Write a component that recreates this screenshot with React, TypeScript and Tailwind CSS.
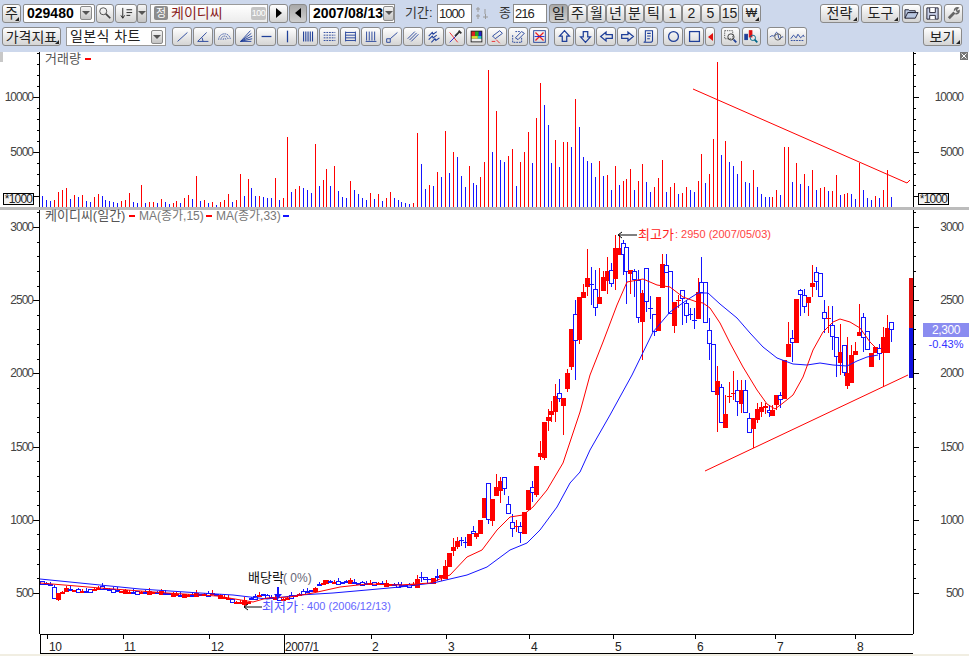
import type { ReactNode } from 'react'

const RED = '#ff0000'
const BLUE = '#1414ff'
const NAVY = '#1f3f99'

// volume bar heights in px, negative = blue
const volumes = [
  -11, -7, -6, 7, 15, 17, 19, -8, 12, -10, 12, -6, -5, 10, 13, -11, -7, -6, -5, -4, 6, 7, 14, -5, -4, 22, -4, 5, 5, -4,
  8, -5, -3, 4, 6, -4, 9, 12, -8, 31, -6, 7, -4, 5, -2, 5, 7, 13, -5, 7, 33, -11, 28, -19, -11, 11, -10, -9, -9, 29,
  -7, 9, 70, -15, 18, 21, -19, -17, -14, 63, -21, 27, 38, -21, 41, -16, -10, -9, 26, -17, -13, -9, -7, 14, -8, 13, -6,
  9, 15, -9, -7, -5, -4, -3, 4, 74, -43, -18, 22, -21, 35, -30, 76, -34, 55, -50, -31, -20, 41, -24, -22, 30, 45, 137,
  -55, 96, -47, -45, 51, 58, -21, 45, 55, 75, -44, 89, 124, -102, -82, -44, 67, -40, 65, 65, -60, 108, -80, -50, -46,
  -44, -30, 46, -31, 32, -17, 41, -22, 26, 28, 38, -17, 26, 43, -25, -15, 20, 29, 47, -15, 20, 24, -13, 14, 20, -17,
  -15, 26, 53, -24, 33, 68, 145, -52, 66, -45, -41, -33, 46, -25, -24, 37, -20, -13, -10, -10, 10, 17, -12, 60, 60,
  -25, 44, -23, 33, -21, 37, -17, 19, 20, -16, 16, 32, -12, 13, 14, -13, -8, 44, -17, -9, -7, 11, -9, 17, 37, -10,
]

// r/b, body top, body bottom, wick top, wick bottom (page y), from index 96 on
type Candle = [string, number, number, number, number]
const candles: Candle[] = [
  ['b', 577, 578, 572, 582], ['b', 577, 580, 577, 580], ['b', 579, 584, 579, 584], ['r', 578, 584, 578, 584],
  ['b', 576, 578, 569, 581], ['r', 575, 578, 575, 581], ['r', 566, 579, 560, 579], ['r', 553, 567, 553, 567],
  ['r', 547, 551, 538, 556], ['r', 541, 547, 537, 549], ['b', 540, 541, 537, 546], ['b', 542, 543, 537, 548],
  ['r', 534, 546, 534, 546], ['b', 531, 534, 526, 534], ['r', 533, 537, 533, 539], ['r', 520, 534, 520, 534],
  ['r', 498, 518, 498, 518], ['b', 483, 520, 483, 524], ['r', 499, 521, 499, 526], ['r', 487, 496, 474, 496],
  ['r', 481, 491, 477, 503], ['b', 477, 489, 477, 495], ['b', 504, 514, 496, 514], ['b', 522, 529, 514, 537],
  ['r', 526, 527, 520, 532], ['b', 526, 533, 522, 543], ['r', 512, 534, 512, 534], ['r', 490, 510, 490, 510],
  ['b', 487, 493, 481, 502], ['r', 466, 495, 466, 497], ['r', 453, 457, 441, 460], ['r', 422, 458, 422, 460],
  ['r', 417, 421, 409, 431], ['r', 411, 415, 401, 422], ['r', 396, 412, 384, 422], ['b', 393, 399, 379, 402],
  ['r', 398, 406, 398, 435], ['r', 373, 389, 369, 392], ['r', 329, 367, 329, 370], ['b', 314, 341, 300, 380],
  ['r', 297, 340, 297, 344], ['r', 292, 298, 284, 298], ['r', 278, 287, 249, 296], ['b', 284, 285, 267, 305],
  ['b', 289, 308, 270, 316], ['r', 297, 304, 268, 304], ['r', 277, 291, 271, 291], ['r', 271, 281, 257, 294],
  ['b', 270, 284, 263, 287], ['r', 248, 279, 235, 290], ['r', 248, 255, 235, 255], ['b', 243, 255, 240, 275],
  ['b', 247, 272, 247, 304], ['r', 270, 274, 270, 294], ['b', 271, 280, 269, 297], ['b', 280, 318, 270, 323],
  ['r', 293, 322, 290, 360], ['b', 268, 302, 268, 312], ['b', 308, 309, 296, 319], ['b', 314, 332, 314, 336],
  ['r', 297, 331, 297, 331], ['r', 264, 288, 254, 288], ['b', 265, 273, 254, 273], ['b', 271, 314, 271, 314],
  ['r', 302, 326, 302, 333], ['r', 300, 301, 295, 308], ['b', 290, 299, 290, 325], ['b', 303, 316, 300, 323],
  ['b', 314, 315, 308, 320], ['b', 320, 321, 308, 329], ['r', 292, 319, 278, 319], ['b', 282, 293, 257, 293],
  ['b', 282, 323, 282, 323], ['b', 330, 344, 318, 360], ['b', 344, 392, 344, 392], ['r', 381, 395, 366, 432],
  ['b', 387, 423, 384, 423], ['r', 414, 428, 395, 428], ['r', 396, 397, 382, 403], ['r', 393, 394, 371, 400],
  ['b', 390, 402, 380, 416], ['r', 390, 404, 380, 413], ['b', 390, 413, 380, 413], ['b', 418, 433, 413, 433],
  ['r', 418, 429, 418, 448], ['r', 409, 420, 403, 423], ['r', 407, 412, 402, 417], ['r', 406, 408, 403, 414],
  ['b', 410, 413, 405, 417], ['r', 410, 416, 405, 416], ['r', 395, 405, 395, 410], ['b', 395, 400, 392, 408],
  ['r', 360, 399, 360, 399], ['r', 344, 357, 322, 357], ['b', 338, 343, 330, 362], ['r', 299, 343, 299, 343],
  ['b', 290, 295, 289, 316], ['b', 295, 307, 289, 313], ['r', 297, 303, 297, 316], ['r', 283, 287, 265, 297],
  ['b', 272, 282, 267, 290], ['b', 273, 297, 273, 297], ['b', 312, 319, 300, 333], ['r', 318, 319, 306, 333],
  ['b', 325, 337, 306, 350], ['b', 337, 357, 337, 377], ['r', 352, 363, 324, 375], ['b', 345, 373, 345, 376],
  ['r', 373, 386, 337, 389], ['r', 355, 383, 345, 383], ['r', 351, 355, 342, 355], ['r', 332, 336, 304, 336],
  ['b', 317, 338, 313, 352], ['b', 331, 350, 331, 350], ['r', 353, 367, 353, 367], ['r', 347, 353, 347, 353],
  ['b', 348, 354, 344, 360], ['r', 337, 353, 327, 387], ['r', 328, 353, 315, 353], ['b', 322, 330, 322, 342],
]

// where the flat stretch of the first months sits: [index, mid y]
const flatMids = [
  [0, 583], [2, 585], [3, 592], [4, 596], [6, 590], [11, 592], [15, 588], [17, 590], [23, 593], [29, 593], [36, 596],
  [41, 595], [43, 594], [47, 599], [49, 603], [52, 603], [53, 599], [56, 595], [58, 598], [61, 600], [64, 596],
  [67, 592], [69, 590], [70, 585], [72, 582], [75, 583], [78, 582], [80, 584], [85, 584], [91, 586], [95, 585],
]

function flatCandle(i: number): Candle {
  if (i === 3) return ['b', 587, 599, 585, 599]
  if (i === 4) return ['r', 593, 600, 593, 601]
  if (i === 51) return ['r', 600, 605, 597, 607]
  if (i === 95) return ['r', 579, 588, 575, 588]
  const k = flatMids.findIndex((m) => m[0] >= i)
  const [x1, y1] = flatMids[Math.max(k - 1, 0)]
  const [x2, y2] = flatMids[k]
  const mid = x2 === x1 ? y2 : y1 + ((y2 - y1) * (i - x1)) / (x2 - x1)
  const half = (i * 7) % 3 === 0 ? 2 : 1
  const top = Math.round(mid - half)
  const up = volumes[i] > 0
  return [up ? 'r' : 'b', top, top + half * 2, top - (i * 5) % 4, top + half * 2 + (i * 3) % 3]
}

const allCandles: Candle[] = [...Array.from({ length: 96 }, (_, i) => flatCandle(i)), ...candles]

const barX = (i: number) => Math.round(42.3 + 3.947 * i)

const maRed =
  '40,583 100,588 167,593 217,596 253,602 267,598 290,597 313,593 340,587 367,584 400,585 430,583 450,575 467,557 482,550 497,530 510,517 523,515 533,507 547,490 563,463 573,433 580,412 590,375 603,342 617,305 627,282 643,279 657,285 670,287 683,297 697,302 703,303 710,308 720,323 730,343 743,367 757,390 767,404 775,409 783,403 793,395 803,377 813,350 823,332 833,322 840,319 850,322 860,328 870,342 878,350'
const maBlue =
  '40,579 100,585 140,589 200,593 233,595 267,599 300,595 333,593 367,590 400,587 433,583 467,575 487,567 510,550 527,543 540,530 557,507 570,483 580,472 590,450 610,415 632,375 653,332 670,312 687,300 698,293 708,293 720,304 737,318 750,333 763,347 777,358 793,364 807,365 820,363 833,365 847,366 857,361 867,357 878,355'

function Ticks({ from, to, step, major }: { from: number; to: number; step: number; major: number }) {
  const rows: ReactNode[] = []
  let n = 0
  for (let y = from; y >= to; y -= step) {
    const big = n % major === 0
    const yy = Math.round(y)
    rows.push(
      <g key={n}>
        <rect x={big ? 33 : 37} y={yy} width={big ? 6 : 2} height={1} fill="#000" />
        <rect x={913} y={yy} width={big ? 6 : 3} height={1} fill="#000" />
      </g>,
    )
    n++
  }
  return <g>{rows}</g>
}

function AxisLabel({ y, children }: { y: number; children: string }) {
  return (
    <>
      <text x={33} y={y + 4} textAnchor="end" fontSize={12} letterSpacing={-1} fill="#444">
        {children}
      </text>
      <text x={963} y={y + 4} textAnchor="end" fontSize={12} letterSpacing={-1} fill="#444">
        {children}
      </text>
    </>
  )
}

function ScaleBox({ x }: { x: number }) {
  return (
    <g>
      <rect x={x + 0.5} y={193.5} width={30} height={11} fill="#f2f2f2" stroke="#000" />
      <text x={x + 15.5} y={203} textAnchor="middle" fontSize={12} letterSpacing={-0.8} fill="#222" shapeRendering="auto">
        *1000
      </text>
    </g>
  )
}

function VolumePanel() {
  return (
    <svg viewBox="0 52 969 155" className="block w-[969px] h-[155px] shrink-0 bg-white overflow-visible" shapeRendering="crispEdges">
      <rect x={0} y={52} width={3} height={10} fill="#c8c8c8" />
      <rect x={39} y={52} width={1} height={155} fill="#000" />
      <rect x={913} y={52} width={1} height={155} fill="#000" />
      <Ticks from={196} to={53} step={11} major={99} />
      <rect x={33} y={97} width={6} height={1} fill="#000" />
      <rect x={33} y={152} width={6} height={1} fill="#000" />
      <rect x={913} y={97} width={6} height={1} fill="#000" />
      <rect x={913} y={152} width={6} height={1} fill="#000" />
      {volumes.map((v, i) => (
        <rect key={i} x={barX(i)} y={207 - Math.abs(v)} width={1} height={Math.abs(v)} fill={v > 0 ? RED : BLUE} />
      ))}
      <g shapeRendering="auto">
        <text x={45} y={63} fontSize={13} fill="#555">
          거래량
        </text>
        <rect x={85} y={58} width={6} height={2} fill={RED} />
        <AxisLabel y={97}>10000</AxisLabel>
        <AxisLabel y={152}>5000</AxisLabel>
        <polyline points="693,89 907,183 910,180" fill="none" stroke={RED} strokeWidth={1} />
      </g>
      <ScaleBox x={3} />
      <ScaleBox x={918} />
      <rect x={960} y={52} width={8} height={8} fill="#777" />
      <path d="M961.5 53.5l5 5M966.5 53.5l-5 5" stroke="#fff" fill="none" shapeRendering="auto" />
    </svg>
  )
}

function PricePanel() {
  return (
    <svg viewBox="0 210 969 424" className="block w-[969px] h-[424px] shrink-0 bg-white overflow-visible" shapeRendering="crispEdges">
      <rect x={39} y={210} width={1} height={424} fill="#000" />
      <rect x={913} y={210} width={1} height={424} fill="#000" />
      <Ticks from={593} to={212} step={14.64} major={5} />
      <g shapeRendering="auto">
        <text x={45} y={220} fontSize={13} fill="#555">
          케이디씨(일간)
        </text>
        <text x={139} y={220} fontSize={12} fill="#777">
          MA(종가,15)
        </text>
        <text x={216} y={220} fontSize={12} fill="#777">
          MA(종가,33)
        </text>
        <AxisLabel y={227}>3000</AxisLabel>
        <AxisLabel y={300}>2500</AxisLabel>
        <AxisLabel y={373}>2000</AxisLabel>
        <AxisLabel y={447}>1500</AxisLabel>
        <AxisLabel y={520}>1000</AxisLabel>
        <AxisLabel y={593}>500</AxisLabel>
      </g>
      <rect x={129} y={215} width={6} height={2} fill={RED} />
      <rect x={206} y={215} width={6} height={2} fill={RED} />
      <rect x={283} y={215} width={6} height={2} fill={BLUE} />
      {allCandles.map(([c, top, bot, hi, lo], i) => {
        const x = barX(i)
        const color = c === 'r' ? RED : BLUE
        const flat = bot - top < 2
        return (
          <g key={i}>
            <rect x={x} y={hi} width={1} height={Math.max(lo - hi, 1)} fill={color} />
            {c === 'r' || flat ? (
              <rect x={x - 2} y={top} width={5} height={Math.max(bot - top, 1)} fill={color} />
            ) : (
              <rect x={x - 1.5} y={top + 0.5} width={4} height={bot - top - 1} fill="#fff" stroke={color} />
            )}
          </g>
        )
      })}
      <g shapeRendering="auto" fill="none" strokeWidth={1}>
        <polyline points={maBlue} stroke={BLUE} />
        <polyline points={maRed} stroke={RED} />
        <polyline points="705,471 908,375" stroke={RED} strokeWidth={1} />
        <path d="M637 235H619M622 232l-4 3 4 3" stroke="#000" />
        <path d="M262 607H245M248 604l-4 3 4 3" stroke="#000" />
        <path d="M278 587V596" stroke={BLUE} strokeWidth={2} />
      </g>
      <path d="M274 594h8l-4 5z" fill={BLUE} shapeRendering="auto" />
      <g shapeRendering="auto">
        <text x={638} y={239} fontSize={13} fill="#f22">
          최고가
        </text>
        <text x={675} y={238} fontSize={11} fill="#f44">
          : 2950 (2007/05/03)
        </text>
        <text x={248} y={582} fontSize={13} fill="#111">
          배당락
        </text>
        <text x={283} y={582} fontSize={12} fill="#667">
          ( 0%)
        </text>
        <text x={262} y={611} fontSize={13} fill="#55f">
          최저가
        </text>
        <text x={301} y={610} fontSize={11} fill="#66f">
          : 400 (2006/12/13)
        </text>
      </g>
      <rect x={909} y={278} width={4} height={50} fill="#e01010" />
      <rect x={909} y={328} width={4} height={50} fill="#1010e0" />
      <rect x={923} y={323} width={46} height={14} fill="#8a8cf0" />
      <g shapeRendering="auto">
        <text x={946} y={334} textAnchor="middle" fontSize={12} letterSpacing={-0.4} fill="#fff">
          2,300
        </text>
        <text x={946} y={348} textAnchor="middle" fontSize={11} fill="#33f">
          -0.43%
        </text>
      </g>
    </svg>
  )
}

const monthTicks: [number, string, number][] = [
  [47, '10', 49], [123, '11', 124], [209, '12', 211], [371, '2', 372], [446, '3', 448],
  [529, '4', 531], [613, '5', 615], [695, '6', 697], [775, '7', 777], [855, '8', 857],
]

function DateAxis() {
  return (
    <svg viewBox="0 634 969 20" className="block w-[969px] h-[20px] shrink-0 bg-white" shapeRendering="crispEdges">
      <rect x={40} y={634} width={873} height={1} fill="#000" />
      <rect x={40} y={653} width={873} height={1} fill="#000" />
      <rect x={40} y={634} width={1} height={20} fill="#000" />
      {monthTicks.map(([x, label, tx]) => (
        <g key={label}>
          <rect x={x} y={634} width={1} height={5} fill="#000" />
          <text x={tx} y={651} fontSize={12} letterSpacing={-0.5} fill="#222" shapeRendering="auto">
            {label}
          </text>
        </g>
      ))}
      <rect x={284} y={634} width={1} height={20} fill="#000" />
      <text x={285} y={651} fontSize={12} letterSpacing={-0.5} fill="#222" shapeRendering="auto">
        2007/1
      </text>
    </svg>
  )
}

function Btn({ w, pressed, corner, children }: { w: string; pressed?: boolean; corner?: boolean; children?: ReactNode }) {
  return (
    <div
      className={`${w} relative h-[19px] shrink-0 flex items-center justify-center rounded-[3px] border border-[#8a8a8a] text-[14px] leading-none text-[#222] ${
        pressed ? 'bg-gradient-to-b from-[#a9a9a9] to-[#cfcfcf]' : 'bg-gradient-to-b from-[#ffffff] to-[#d4d4d4]'
      }`}
    >
      {children}
      {corner && (
        <span className="absolute right-[1px] bottom-[1px] w-0 h-0 border-l-[4px] border-l-transparent border-b-[4px] border-b-[#222]" />
      )}
    </div>
  )
}

function Caret({ className }: { className: string }) {
  return (
    <div className={`${className} shrink-0 flex items-center justify-center rounded-[2px] border border-[#8a8a8a] bg-gradient-to-b from-[#f4f4f4] to-[#c4c4c4]`}>
      <span className="w-0 h-0 border-x-[4px] border-x-transparent border-t-[4px] border-t-[#555]" />
    </div>
  )
}

function Ico({ children }: { children: ReactNode }) {
  return (
    <svg viewBox="0 0 19 19" className="w-[17px] h-[17px]" fill="none" stroke={NAVY} strokeWidth={1}>
      {children}
    </svg>
  )
}

const drawTools: ReactNode[] = [
  <path d="M4 15L15 5" />,
  <path d="M3 15H15M3 15L13 5M9 15L8 11" />,
  <path d="M3 13a6.5 6.5 0 0 1 13 0M5.5 13a4 4 0 0 1 8 0M8 13a1.5 1.5 0 0 1 3 0" strokeDasharray="1.5 1" />,
  <path d="M4 15L15 3M4 15L16 6M4 15L17 9M4 15L17 12M4 15L16 15" />,
  <path d="M4 9.5H15" strokeWidth={1.4} />,
  <path d="M9.5 3V16" strokeWidth={1.4} />,
  <path d="M4 4V15M6.5 4V15M9 4V15M11.500 4V15M14 4V15" strokeWidth={1.2} />,
  <path d="M3 5H16M3 8H16M3 11H16M3 14H16" strokeDasharray="2 1" />,
  <path d="M4 4V15M15 4V15M4 5H15M4 8H15M4 11H15M4 14H15" />,
  <path d="M4 4V14M7 4V14M10 4V14M13 4V14M3 15H15" />,
  <path d="M7 12L15 5M3 12h4v4H3z" />,
  <path d="M3 12L11 4M7 15L15 7M5 13.500L13 5.500" />,
  <path d="M3 9l4-4 1 2 4-3M3 13l4-4 1 2 4-3M6 16l4-4 1 2 4-3" strokeWidth={1.2} />,
  <g>
    <path d="M3 5L12 16" stroke="#e22" />
    <path d="M12 7L3 16" stroke="#22c" />
    <path d="M9 9l5-5M13 3l3 3" stroke="#333" strokeWidth={2} />
  </g>,
  <g stroke="none">
    <rect x={3} y={3} width={13} height={13} fill="#222" />
    <rect x={4} y={4} width={4} height={5} fill="#d22" />
    <rect x={8} y={4} width={4} height={5} fill="#2a2" />
    <rect x={12} y={4} width={3} height={5} fill="#22c" />
    <rect x={4} y={9} width={7} height={3} fill="#dd3" />
    <rect x={11} y={9} width={4} height={3} fill="#2cc" />
    <rect x={4} y={12} width={11} height={3} fill="#eee" />
  </g>,
  <g>
    <path d="M4 9l8-6 3 3-8 6z" />
    <path d="M8 13l4 4" stroke="#e22" />
    <path d="M3 15h4" stroke="#e22" />
  </g>,
  <g>
    <path d="M3 8v8h10V10" strokeDasharray="2 1" />
    <path d="M6 11l7-7 3 2-7 7z" />
    <path d="M6 4h5" strokeDasharray="2 1" />
  </g>,
  <g>
    <rect x={3} y={3} width={13} height={13} />
    <path d="M5 5l9 9" stroke="#e22" strokeWidth={1.4} />
    <path d="M14 5l-9 9" stroke="#e22" strokeWidth={1.4} />
    <path d="M4 9.500h11" stroke="#22c" />
  </g>,
]

const arrows: ReactNode[] = [
  <path d="M9.500 3l5.500 6h-3v6H7V9H4z" strokeWidth={1.4} />,
  <path d="M9.500 16l5.500-6h-3V4H7v6H4z" strokeWidth={1.4} />,
  <path d="M3 9.500l6-5v3h7v4H9v3z" strokeWidth={1.4} />,
  <path d="M16 9.500l-6-5v3H3v4h7v3z" strokeWidth={1.4} />,
  <path d="M6 3h8v11c0 1.500-2 2-3 2H4c1 0 2-.5 2-2zM8 6h4M8 9h4M8 12h3" strokeWidth={1.2} />,
]

function TopBar() {
  return (
    <div className="flex items-center h-[27px] pt-[3px] pb-[4px] pl-[2px] shrink-0">
      <Btn w="w-[19px]" corner>주</Btn>
      <div className="ml-[2px] w-[72px] h-[19px] shrink-0 flex items-center justify-between border border-[#8a8a8a] bg-white pl-[3px] pr-[2px] rounded-[2px]">
        <span className="text-[14px] font-bold text-black">029480</span>
        <Caret className="w-[12px] h-[14px]" />
      </div>
      <div className="ml-[1px]">
        <Btn w="w-[18px]">
          <svg viewBox="0 0 16 16" className="w-[14px] h-[14px]" fill="none" stroke="#444">
            <circle cx={6} cy={6} r={4} />
            <path d="M9 9l5 5" strokeWidth={2} />
          </svg>
        </Btn>
      </div>
      <div className="ml-[1px]">
        <Btn w="w-[22px]">
          <svg viewBox="0 0 16 16" className="w-[15px] h-[15px]" fill="none" stroke="#222">
            <path d="M4 2v11M2 10l2 3 2-3M8 4h6M8 7h6M8 10h4" />
          </svg>
        </Btn>
      </div>
      <Caret className="w-[10px] h-[19px]" />
      <div className="ml-[3px] w-[118px] h-[19px] shrink-0 flex items-center border border-[#9a9a9a] bg-gradient-to-b from-[#ffffff] to-[#ececec] pl-[3px] pr-[1px]">
        <span className="w-[14px] h-[14px] bg-[#8c8c8c] text-white text-[11px] leading-[14px] text-center rounded-[2px]">정</span>
        <span className="ml-[3px] text-[14px] text-[#8a1c1c] leading-none">케이디씨</span>
        <span className="ml-auto w-[15px] h-[13px] bg-[#c4c4c4] text-white text-[9px] leading-[13px] text-center rounded-[2px] tracking-[-0.5px]">100</span>
      </div>
      <div className="ml-[1px]">
        <Btn w="w-[19px]"><span className="w-0 h-0 border-y-[5px] border-y-transparent border-l-[6px] border-l-black" /></Btn>
      </div>
      <div className="ml-[1px]">
        <Btn w="w-[18px]" pressed><span className="w-0 h-0 border-y-[5px] border-y-transparent border-r-[6px] border-r-black" /></Btn>
      </div>
      <div className="ml-[2px] w-[86px] h-[19px] shrink-0 flex items-center justify-between border border-[#8a8a8a] bg-white pl-[3px] pr-[1px]">
        <span className="text-[14px] font-bold text-black">2007/08/13</span>
        <Caret className="w-[11px] h-[15px]" />
      </div>
      <span className="ml-[10px] w-[28px] shrink-0 text-[13px] text-[#333] whitespace-nowrap">기간:</span>
      <div className="ml-[4px] w-[35px] h-[19px] shrink-0 border border-[#8a8a8a] bg-white text-[13px] leading-[17px] pl-[1px] text-[#222] tracking-[-1px]">1000</div>
      <svg viewBox="0 0 14 14" className="ml-[3px] w-[14px] h-[14px] shrink-0" fill="none" stroke="#999">
        <path d="M3 1v5M1 3h4M10 3v5M1 10h4M3 8v5M8 11h5M10.500 8v5" />
      </svg>
      <span className="ml-[10px] w-[12px] shrink-0 text-[13px] text-[#333]">종</span>
      <div className="ml-[2px] w-[34px] h-[19px] shrink-0 border border-[#8a8a8a] bg-white text-[13px] leading-[17px] pl-[1px] text-[#222] tracking-[-1px]">216</div>
      <div className="ml-[2px] flex gap-[0px]">
        <Btn w="w-[19px]" pressed>일</Btn>
        {['주', '월', '년', '분', '틱', '1', '2', '5', '15'].map((t) => (
          <Btn key={t} w="w-[19px]">{t}</Btn>
        ))}
      </div>
      <div className="ml-[3px]">
        <Btn w="w-[19px]" corner><span className="text-[12px]">₩</span></Btn>
      </div>
      <div className="ml-[59px] flex gap-[2px]">
        <Btn w="w-[39px]" corner>전략</Btn>
        <Btn w="w-[39px]" corner>도구</Btn>
        <Btn w="w-[19px]">
          <svg viewBox="0 0 16 16" className="w-[15px] h-[15px]" fill="#b8c6e0" stroke="#223">
            <path d="M1 13V4h4l1 1h6v2H4l-3 6h11l3-6H4" />
          </svg>
        </Btn>
        <Btn w="w-[19px]">
          <svg viewBox="0 0 16 16" className="w-[15px] h-[15px]" fill="#c8d0e8" stroke="#223">
            <path d="M2 2h12v12H2z" />
            <path d="M5 2v5h6V2M5 14V10h6v4" fill="#fff" />
          </svg>
        </Btn>
        <Btn w="w-[19px]">
          <svg viewBox="0 0 16 16" className="w-[15px] h-[15px]" fill="none" stroke="#666">
            <path d="M3 13l6-6" strokeWidth={3} />
            <path d="M9 5a3 3 0 0 1 4-3l-2 2 1 2 2-1a3 3 0 0 1-4 3" strokeWidth={1.5} />
          </svg>
        </Btn>
      </div>
    </div>
  )
}

function ToolBar() {
  return (
    <div className="flex items-center h-[25px] pb-[6px] pl-[2px] shrink-0">
      <Btn w="w-[59px]" corner>가격지표</Btn>
      <div className="ml-[5px] w-[100px] h-[19px] shrink-0 flex items-center justify-between border border-[#9a9a9a] bg-white pl-[3px] pr-[2px]">
        <span className="text-[14px] text-[#222] tracking-[0.4px] whitespace-nowrap">일본식 차트</span>
        <Caret className="w-[12px] h-[14px]" />
      </div>
      <div className="ml-[6px] flex gap-[1px]">
        {drawTools.map((d, i) => (
          <Btn key={i} w="w-[20px]"><Ico>{d}</Ico></Btn>
        ))}
      </div>
      <div className="ml-[5px] flex gap-[1px]">
        {arrows.map((d, i) => (
          <Btn key={i} w="w-[20px]"><Ico>{d}</Ico></Btn>
        ))}
      </div>
      <div className="ml-[5px] flex gap-[1px]">
        <Btn w="w-[20px]"><Ico><circle cx={9.500} cy={9.500} r={5.500} strokeWidth={1.4} /></Ico></Btn>
        <Btn w="w-[20px]"><Ico><rect x={4} y={4} width={11} height={11} strokeWidth={1.4} /></Ico></Btn>
        <Btn w="w-[10px]"><span className="w-0 h-0 border-y-[4px] border-y-transparent border-r-[5px] border-r-[#e01010]" /></Btn>
      </div>
      <div className="ml-[6px] flex gap-[2px]">
        <Btn w="w-[19px]">
          <Ico>
            <path d="M3 3h9v9H3z" stroke="#555" strokeDasharray="1.500 1" />
            <circle cx={10} cy={10} r={3.500} stroke="#333" />
            <path d="M13 13l3 3" stroke={NAVY} strokeWidth={2} />
          </Ico>
        </Btn>
        <Btn w="w-[19px]">
          <Ico>
            <rect x={2} y={7} width={3} height={6} fill={NAVY} />
            <rect x={7} y={3} width={3} height={7} fill="#e01010" stroke="#e01010" />
            <circle cx={11} cy={11} r={3} stroke="#068" />
            <path d="M13 13l3 3" stroke="#068" strokeWidth={2} />
          </Ico>
        </Btn>
      </div>
      <div className="ml-[6px] flex gap-[2px]">
        <Btn w="w-[19px]">
          <Ico>
            <path d="M2 10c2-1 2-2 4-1s2-5 4-4 1 7 3 7 2-3 4-2" />
            <circle cx={11} cy={10} r={3.500} stroke="#555" />
          </Ico>
        </Btn>
        <Btn w="w-[19px]">
          <Ico>
            <path d="M2 12l3-4 3 3 2-4 3 4 3-3 1 2" />
            <path d="M2 14h15" strokeDasharray="2 1" />
          </Ico>
        </Btn>
      </div>
      <div className="ml-[116px]">
        <Btn w="w-[39px]" corner>보기</Btn>
      </div>
    </div>
  )
}

export default function App() {
  return (
    <div className="w-[969px] h-[656px] overflow-hidden flex flex-col bg-[#f1eee2] [font-family:'Liberation_Sans','Noto_Sans_CJK_KR',sans-serif]">
      <div className="h-[52px] shrink-0 bg-[#cdd8ec]">
        <TopBar />
        <ToolBar />
      </div>
      <VolumePanel />
      <div className="h-[3px] shrink-0 bg-[#bcbcbc]" />
      <PricePanel />
      <DateAxis />
    </div>
  )
}
